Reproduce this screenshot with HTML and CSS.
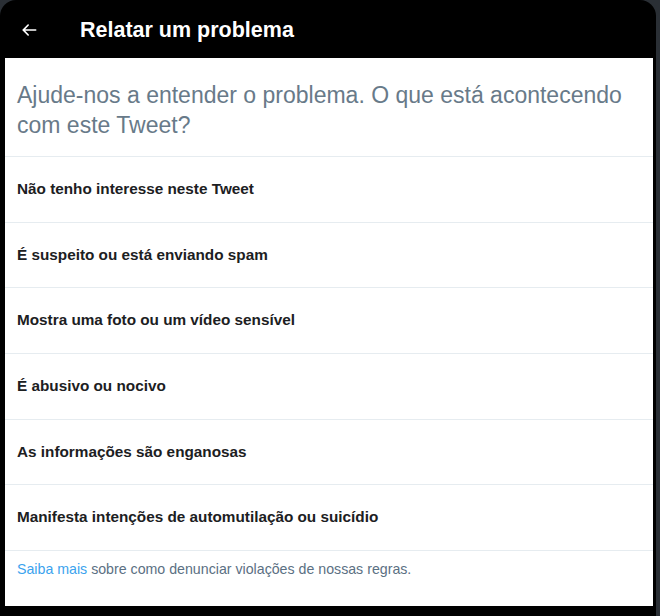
FILE: index.html
```html
<!DOCTYPE html>
<html lang="pt-BR">
<head>
    <meta charset="UTF-8">
    <meta name="viewport" content="width=device-width, initial-scale=1.0">
    <title>Relatar um problema</title>
    <link rel="stylesheet" href="styles.css">
</head>
<body>
    <div class="modal">
        <div class="modal-header">
            <button class="back-btn" aria-label="Voltar">
                <svg viewBox="0 0 24 24" width="20" height="20">
                    <path d="M20 11H7.414l4.293-4.293a1 1 0 0 0-1.414-1.414l-6 6a1 1 0 0 0 0 1.414l6 6a1 1 0 0 0 1.414-1.414L7.414 13H20a1 1 0 0 0 0-2z" fill="#fff"/>
                </svg>
            </button>
            <h1>Relatar um problema</h1>
        </div>
        <div class="modal-body">
            <p class="question">Ajude-nos a entender o problema. O que está acontecendo com este Tweet?</p>
            <ul class="options">
                <li>Não tenho interesse neste Tweet</li>
                <li>É suspeito ou está enviando spam</li>
                <li>Mostra uma foto ou um vídeo sensível</li>
                <li>É abusivo ou nocivo</li>
                <li>As informações são enganosas</li>
                <li>Manifesta intenções de automutilação ou suicídio</li>
            </ul>
            <p class="footer"><a href="#">Saiba mais</a> sobre como denunciar violações de nossas regras.</p>
        </div>
    </div>
</body>
</html>
```

FILE: styles.css
```css
body {
    margin: 0;
    background: #2a2f35;
    font-family: "Liberation Sans", Arial, sans-serif;
    height: 616px;
    overflow: hidden;
}
.modal {
    width: 656px;
    height: 616px;
    background: #000;
    border-radius: 16px 16px 0 0;
    display: flex;
    flex-direction: column;
}
.modal-header {
    height: 58px;
    display: flex;
    align-items: center;
    padding-left: 19px;
}
.back-btn {
    background: none;
    border: none;
    padding: 0;
    width: 20px;
    height: 20px;
    margin-top: 2px;
    cursor: pointer;
}
.modal-header h1 {
    margin: 0 0 0 41px;
    color: #fff;
    font-size: 21.5px;
    font-weight: bold;
    padding-top: 2px;
}
.modal-body {
    background: #fff;
    margin: 0 3px 0 5px;
    height: 548px;
}
.question {
    margin: 0;
    padding: 22px 12px 16px;
    font-size: 23px;
    line-height: 30px;
    color: #687a89;
}
.options {
    list-style: none;
    margin: 0;
    padding: 0;
}
.options li {
    border-top: 1px solid #e6ecf0;
    padding: 22px 12px 22.67px;
    font-size: 15.3px;
    line-height: 20px;
    font-weight: bold;
    color: #1c2022;
    cursor: pointer;
}
.footer {
    border-top: 1px solid #e6ecf0;
    margin: 0;
    padding: 9px 12px;
    font-size: 14.2px;
    line-height: 18px;
    color: #5b7083;
}
.footer a {
    color: #3ba3ee;
    text-decoration: none;
}
```
